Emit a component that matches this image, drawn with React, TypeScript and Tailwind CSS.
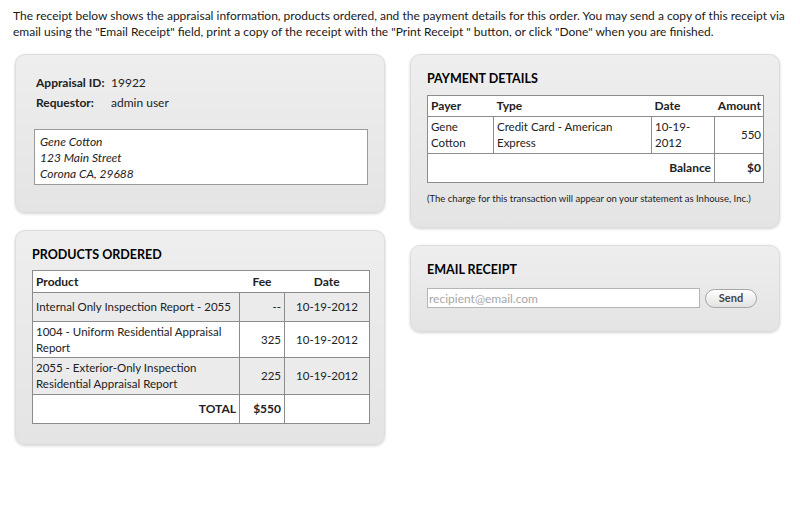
import React from "react";

const products = [
  { name: "Internal Only Inspection Report - 2055", fee: "--", date: "10-19-2012", h: "h-[29px]", shade: true },
  { name: "1004 - Uniform Residential Appraisal Report", fee: "325", date: "10-19-2012", h: "h-[36px]", shade: false },
  { name: "2055 - Exterior-Only Inspection Residential Appraisal Report", fee: "225", date: "10-19-2012", h: "h-[37px]", shade: true },
];

const Card = ({ className, children }: { className?: string; children: React.ReactNode }) => (
  <div
    className={
      "rounded-[10px] border border-[#dcdcdc] bg-gradient-to-b from-[#eeeeee] to-[#e4e4e4] shadow-[0_1px_3px_rgba(0,0,0,0.18)] " +
      (className ?? "")
    }
  >
    {children}
  </div>
);

export default function App() {
  return (
    <div className="w-[800px] h-[528px] bg-white font-['Lato','Open_Sans',sans-serif] text-[12px] text-[#222]">
      {/* Intro */}
      <p className="px-[13px] pt-[8px] leading-[16px] text-[#1a1a1a]">
        The receipt below shows the appraisal information, products ordered, and the payment details for this order. You may send a copy of this receipt via email using the "Email Receipt" field, print a copy of the receipt with the "Print Receipt " button, or click "Done" when you are finished.
      </p>

      <div className="flex gap-[25px] pl-[15px] pt-[14px]">
        {/* Left column */}
        <div className="flex w-[370px] flex-col gap-[17px]">
          <Card className="h-[159px] px-[16px] pt-[18px]">
            <div className="pl-[4px] leading-[20px]">
              <div className="flex">
                <span className="w-[75px] font-bold">Appraisal ID:</span>
                <span>19922</span>
              </div>
              <div className="flex">
                <span className="w-[75px] font-bold">Requestor:</span>
                <span>admin user</span>
              </div>
            </div>
            <div className="mt-[16px] ml-[2px] h-[56px] border border-[#9a9a9a] bg-white px-[5px] py-[4px] italic leading-[16px]">
              <div>Gene Cotton</div>
              <div>123 Main Street</div>
              <div>Corona CA, 29688</div>
            </div>
          </Card>

          <Card className="h-[215px] px-[16px] pt-[16px]">
            <h2 className="mb-[7px] text-[12.5px] font-bold leading-[16px] text-black">PRODUCTS ORDERED</h2>
            <table className="w-[338px] border-collapse border border-[#8c8c8c] text-[11.5px] leading-[16px]">
              <thead>
                <tr className="h-[22px] bg-white text-[12px]">
                  <th className="px-[3px] text-left font-bold">Product</th>
                  <th className="w-[45px] text-center font-bold">Fee</th>
                  <th className="w-[85px] text-center font-bold">Date</th>
                </tr>
              </thead>
              <tbody>
                {products.map((p) => (
                  <tr key={p.name} className={p.h + " " + (p.shade ? "bg-[#ebebeb]" : "bg-white")}>
                    <td className="border-t border-[#8c8c8c] px-[3px] align-middle">{p.name}</td>
                    <td className="border border-[#8c8c8c] border-b-0 px-[3px] text-right">{p.fee}</td>
                    <td className="border-t border-[#8c8c8c] text-center">{p.date}</td>
                  </tr>
                ))}
                <tr className="h-[29px] bg-white text-[12px]">
                  <td className="border-t border-[#8c8c8c] px-[3px] text-right font-bold">TOTAL</td>
                  <td className="border border-[#8c8c8c] border-b-0 px-[3px] text-right font-bold">$550</td>
                  <td className="border-t border-[#8c8c8c]"></td>
                </tr>
              </tbody>
            </table>
          </Card>
        </div>

        {/* Right column */}
        <div className="flex w-[370px] flex-col gap-[17px]">
          <Card className="h-[174px] px-[16px] pt-[16px]">
            <h2 className="mb-[8px] text-[12.5px] font-bold leading-[16px] text-black">PAYMENT DETAILS</h2>
            <table className="w-[337px] border-collapse border border-[#8c8c8c] text-[11.5px] leading-[16px]">
              <thead>
                <tr className="h-[21px] bg-white text-[12px]">
                  <th className="w-[66px] px-[3px] text-left font-bold">Payer</th>
                  <th className="w-[158px] px-[3px] text-left font-bold">Type</th>
                  <th className="w-[63px] px-[3px] text-left font-bold">Date</th>
                  <th className="px-[2px] text-right font-bold">Amount</th>
                </tr>
              </thead>
              <tbody>
                <tr className="h-[37px] bg-white">
                  <td className="border border-[#8c8c8c] border-l-0 px-[3px]">Gene<br />Cotton</td>
                  <td className="border border-[#8c8c8c] px-[3px]">Credit Card - American<br />Express</td>
                  <td className="border border-[#8c8c8c] px-[3px]">10-19-<br />2012</td>
                  <td className="border border-[#8c8c8c] border-r-0 px-[2px] text-right">550</td>
                </tr>
                <tr className="h-[29px] bg-white text-[12px]">
                  <td colSpan={3} className="border-r border-[#8c8c8c] px-[3px] text-right font-bold">Balance</td>
                  <td className="px-[2px] text-right font-bold">$0</td>
                </tr>
              </tbody>
            </table>
            <p className="mt-[9px] whitespace-nowrap text-[9.5px] leading-[14px] text-[#222]">
              (The charge for this transaction will appear on your statement as Inhouse, Inc.)
            </p>
          </Card>

          <Card className="h-[87px] px-[16px] pt-[16px]">
            <h2 className="mb-[10px] text-[12.5px] font-bold leading-[16px] text-black">EMAIL RECEIPT</h2>
            <div className="flex items-center gap-[5px]">
              <input
                placeholder="recipient@email.com"
                className="h-[20px] w-[273px] border border-[#b5b5b5] bg-white px-[1px] text-[12px] outline-none placeholder:text-[#a8a8a8]"
              />
              <button className="h-[19px] w-[52px] rounded-full border border-[#a5a5a5] bg-gradient-to-b from-white to-[#e2e2e2] text-[11px] font-bold text-[#444] shadow-[inset_0_1px_0_white]">
                Send
              </button>
            </div>
          </Card>
        </div>
      </div>
    </div>
  );
}
